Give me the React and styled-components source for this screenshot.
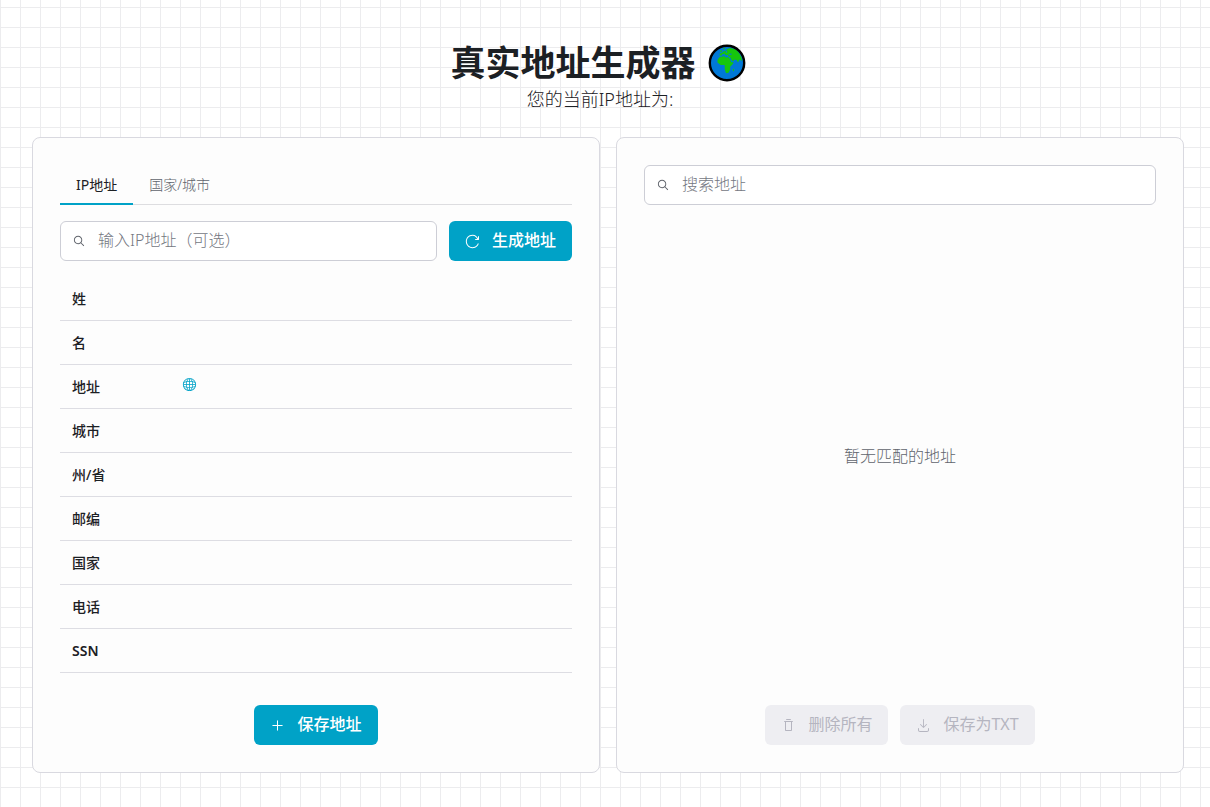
import React, { useState } from 'react';
import styled, { createGlobalStyle } from 'styled-components';
import {
  RxDownload,
  RxGlobe,
  RxMagnifyingGlass,
  RxPlus,
  RxReload,
  RxTrash,
} from 'react-icons/rx';

const GlobalStyle = createGlobalStyle`
  *,
  *::before,
  *::after {
    box-sizing: border-box;
  }

  body {
    margin: 0;
    color: #1c2024;
    background-color: #fff;
    background-image: linear-gradient(to right, #ececee 1px, transparent 1px),
      linear-gradient(to bottom, #ececee 1px, transparent 1px);
    background-size: 20px 20px;
    background-position: 0 7px;
    font-family: 'Noto Sans', 'Noto Sans CJK SC', sans-serif;
    font-size: 16px;
    line-height: 24px;
  }

  button,
  input {
    font-family: inherit;
  }
`;

const Page = styled.div`
  padding: 40px 26px 32px 32px;
`;

const Header = styled.header`
  padding-right: 16px;
  text-align: center;
`;

const Title = styled.h1`
  display: flex;
  align-items: center;
  justify-content: center;
  gap: 12px;
  margin: 0;
  padding-right: 4px;
  font-size: 35px;
  font-weight: 700;
  line-height: 46px;
`;

const Subtitle = styled.p`
  margin: 0;
  font-size: 18px;
  font-weight: 300;
  line-height: 26px;
`;

const Columns = styled.main`
  display: grid;
  grid-template-columns: 1fr 1fr;
  gap: 16px;
  margin-top: 25px;
`;

const Card = styled.section`
  display: flex;
  flex-direction: column;
  padding: 27px;
  border: 1px solid #d9d9e0;
  border-radius: 8px;
  background: #fdfdfd;
`;

const TabList = styled.div`
  display: flex;
  height: 40px;
  margin-bottom: 16px;
  box-shadow: inset 0 -1px #dddde0;
`;

const Tab = styled.button`
  padding: 0 16px 2px;
  border: 0;
  background: none;
  color: ${props => (props.$active ? '#1c2024' : '#60646c')};
  font-size: 14px;
  font-weight: ${props => (props.$active ? 400 : 300)};
  box-shadow: ${props => (props.$active ? 'inset 0 -2px #00a2c7' : 'none')};
  cursor: pointer;
`;

const SearchRow = styled.div`
  display: flex;
  gap: 12px;
`;

const Field = styled.label`
  display: flex;
  flex: 1;
  align-items: center;
  gap: 12px;
  min-width: 0;
  height: 40px;
  padding: 0 11px;
  border: 1px solid #cdced6;
  border-radius: 6px;
  background: #fff;
  color: #60646c;

  svg {
    flex: none;
  }
`;

const FieldInput = styled.input`
  flex: 1;
  min-width: 0;
  padding: 0 0 2px;
  border: 0;
  outline: none;
  background: none;
  color: #1c2024;
  font-size: 16px;
  font-weight: 300;
  line-height: 24px;

  &::placeholder {
    color: #74777f;
    opacity: 1;
  }
`;

const Button = styled.button`
  display: inline-flex;
  align-items: center;
  justify-content: center;
  gap: 12px;
  height: 40px;
  padding: 0 16px;
  border: 0;
  border-radius: 6px;
  background: #00a2c7;
  color: #fff;
  font-size: 16px;
  font-weight: 500;
  line-height: 24px;
  white-space: nowrap;
  cursor: pointer;

  &:disabled {
    background: #eeeef2;
    color: #b5b5c0;
    cursor: default;
  }
`;

const ButtonText = styled.span`
  padding-bottom: 2px;
  font-weight: ${props => (props.$light ? 400 : 500)};
`;

const Table = styled.table`
  width: 100%;
  margin-top: 16px;
  border-collapse: separate;
  border-spacing: 0;
  font-size: 14px;
  line-height: 20px;

  th,
  td {
    height: 44px;
    padding: 0 12px;
    border-bottom: 1px solid #dddde3;
    text-align: left;
  }

  td {
    width: 80%;
  }
`;

const RowHeader = styled.th`
  min-width: 110px;
  font-weight: ${props => (props.$latin ? 600 : 500)};
`;

const MapLink = styled.a`
  display: flex;
  width: 15px;
  margin-bottom: 4px;
  color: #00a2c7;
`;

const Empty = styled.div`
  display: flex;
  flex: 1;
  align-items: center;
  justify-content: center;
  padding-top: 2px;
  color: #60646c;
  font-weight: 300;
`;

const Actions = styled.div`
  display: flex;
  justify-content: center;
  gap: 12px;
  margin-top: ${props => props.$top || 0}px;
`;

const fields = ['姓', '名', '地址', '城市', '州/省', '邮编', '国家', '电话', 'SSN'];

const Earth = () => (
  <svg width="38" height="38" viewBox="0 0 38 38" aria-hidden="true">
    <circle cx="19" cy="19" r="17" fill="#0078d7" />
    <path
      d="M11.300 13.200L14.500 12.500 17 12.300 17.500 13.500 20.700 13.200 22 15.500 23.300 18.200 25.700 18.200 24.500 20.500 22.200 22.800 22.200 25.500 20.500 28.800 18 29.300 16.800 25.500 16.600 21 12.700 21 9.500 18.500 9.500 16z"
      fill="#16c60c"
    />
    <path
      d="M11.500 11.500L11.800 9.500 14 9 15 7.500 17.500 7 19 5 22.500 4 28 5.500 31 9 33.500 13.500 34 17 31.500 15.500 30 18.500 28.500 16 26.500 15.500 25 17.500 23.800 16.500 22 13 20 12.300 20 11 17.500 11.200 16.500 9.800 14 10.500 13.500 11.800z"
      fill="#16c60c"
    />
    <path
      d="M12 7.500l1-1.800 1 1-.6 1.800zM14.800 4.500l2-.8.4 1-2 .8zM24.800 25.500l1.200-1v2l-1 1z"
      fill="#16c60c"
    />
    <path d="M17.500 8.500l.7-2 1 .3-.2 2zM20.500 10l3-.4v1.200l-2.600.2z" fill="#0078d7" />
    <circle cx="19" cy="19" r="17.200" fill="none" stroke="#000" strokeWidth="2.400" />
  </svg>
);

const SearchField = ({ label, value, onChange }) => (
  <Field>
    <RxMagnifyingGlass size={14} />
    <FieldInput
      type="text"
      aria-label={label}
      placeholder={label}
      value={value}
      onChange={event => onChange(event.target.value)}
    />
  </Field>
);

const App = () => {
  const [tab, setTab] = useState('ip');
  const [ip, setIp] = useState('');
  const [query, setQuery] = useState('');

  return (
    <>
      <GlobalStyle />
      <Page>
        <Header>
          <Title>
            真实地址生成器
            <Earth />
          </Title>
          <Subtitle>您的当前IP地址为:</Subtitle>
        </Header>
        <Columns>
          <Card>
            <TabList role="tablist">
              <Tab
                type="button"
                role="tab"
                aria-selected={tab === 'ip'}
                $active={tab === 'ip'}
                onClick={() => setTab('ip')}
              >
                IP地址
              </Tab>
              <Tab
                type="button"
                role="tab"
                aria-selected={tab === 'city'}
                $active={tab === 'city'}
                onClick={() => setTab('city')}
              >
                国家/城市
              </Tab>
            </TabList>
            <SearchRow>
              <SearchField label="输入IP地址（可选）" value={ip} onChange={setIp} />
              <Button type="button">
                <RxReload size={15} />
                <ButtonText>生成地址</ButtonText>
              </Button>
            </SearchRow>
            <Table>
              <tbody>
                {fields.map(name => (
                  <tr key={name}>
                    <RowHeader scope="row" $latin={name === 'SSN'}>
                      {name}
                    </RowHeader>
                    <td>
                      {name === '地址' && (
                        <MapLink href="#map" aria-label="地址">
                          <RxGlobe size={15} />
                        </MapLink>
                      )}
                    </td>
                  </tr>
                ))}
              </tbody>
            </Table>
            <Actions $top={32}>
              <Button type="button">
                <RxPlus size={15} />
                <ButtonText>保存地址</ButtonText>
              </Button>
            </Actions>
          </Card>
          <Card>
            <SearchRow>
              <SearchField label="搜索地址" value={query} onChange={setQuery} />
            </SearchRow>
            <Empty>暂无匹配的地址</Empty>
            <Actions>
              <Button type="button" disabled>
                <RxTrash size={15} />
                <ButtonText $light>删除所有</ButtonText>
              </Button>
              <Button type="button" disabled>
                <RxDownload size={15} />
                <ButtonText $light>保存为TXT</ButtonText>
              </Button>
            </Actions>
          </Card>
        </Columns>
      </Page>
    </>
  );
};

export default App;
